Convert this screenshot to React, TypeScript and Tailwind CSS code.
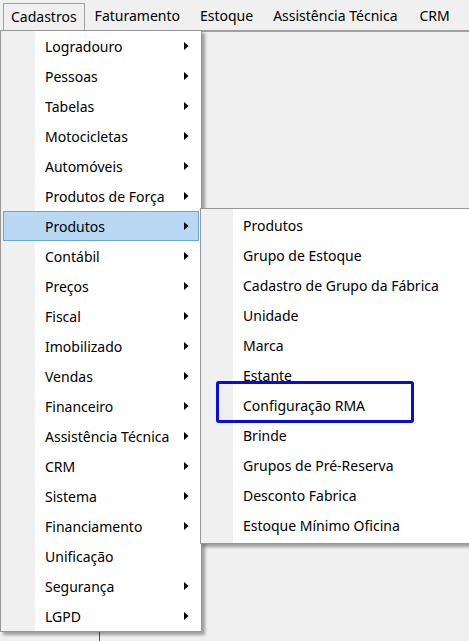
import React from 'react';

const mainItems: { label: string; sub: boolean }[] = [
  { label: 'Logradouro', sub: true },
  { label: 'Pessoas', sub: true },
  { label: 'Tabelas', sub: true },
  { label: 'Motocicletas', sub: true },
  { label: 'Automóveis', sub: true },
  { label: 'Produtos de Força', sub: true },
  { label: 'Produtos', sub: true },
  { label: 'Contábil', sub: true },
  { label: 'Preços', sub: true },
  { label: 'Fiscal', sub: true },
  { label: 'Imobilizado', sub: true },
  { label: 'Vendas', sub: true },
  { label: 'Financeiro', sub: true },
  { label: 'Assistência Técnica', sub: true },
  { label: 'CRM', sub: true },
  { label: 'Sistema', sub: true },
  { label: 'Financiamento', sub: true },
  { label: 'Unificação', sub: false },
  { label: 'Segurança', sub: true },
  { label: 'LGPD', sub: true },
];

const subItems = [
  'Produtos',
  'Grupo de Estoque',
  'Cadastro de Grupo da Fábrica',
  'Unidade',
  'Marca',
  'Estante',
  'Configuração RMA',
  'Brinde',
  'Grupos de Pré-Reserva',
  'Desconto Fabrica',
  'Estoque Mínimo Oficina',
];

const menuBar = ['Faturamento', 'Estoque', 'Assistência Técnica', 'CRM'];

const Arrow = () => (
  <svg width="5" height="8" viewBox="0 0 5 8" className="shrink-0">
    <path d="M0 0 L4.5 4 L0 8 Z" fill="#000" />
  </svg>
);

export default function App() {
  return (
    <div
      className="relative w-[469px] h-[641px] overflow-hidden bg-[#f0f0f0] text-black text-[14px]"
      style={{ fontFamily: '"Noto Sans", "Open Sans", sans-serif' }}
    >
      {/* menu bar */}
      <div className="flex h-[32px] items-center border-b-2 border-[#a0a0a0] pl-[3px]">
        <div className="h-[27px] mt-[2px] px-[7px] flex items-center border border-[#a0a0a0] border-b-0 bg-[#f0f0f0]">
          Cadastros
        </div>
        <div className="flex items-center gap-[20px] ml-[10px]">
          {menuBar.map((m) => (
            <span key={m} className={m === 'CRM' ? 'ml-[2px]' : ''}>
              {m}
            </span>
          ))}
        </div>
      </div>

      {/* background window edge */}
      <div className="absolute left-[99px] top-[600px] h-[41px] border-l border-[#555]" />

      {/* main dropdown */}
      <div className="absolute left-0 top-[30px] w-[202px] border border-[#979797] bg-[linear-gradient(to_right,#f0f0f0_34px,#fff_34px)] px-[2px] shadow-[3px_3px_3px_rgba(0,0,0,0.35)]">
        {mainItems.map((it) => {
          const active = it.label === 'Produtos';
          return (
            <div
              key={it.label}
              className={
                'flex h-[30px] items-center justify-between pl-[41px] pr-[9px] border ' +
                (active ? 'bg-[#b8d8f4] border-[#64a8e2]' : 'border-transparent')
              }
            >
              <span>{it.label}</span>
              {it.sub && <Arrow />}
            </div>
          );
        })}
      </div>

      {/* submenu */}
      <div className="absolute left-[200px] top-[208px] w-[290px] border border-[#979797] bg-[linear-gradient(to_right,#f0f0f0_32px,#fff_32px)] pt-[1px] pb-[3px] pl-[2px] shadow-[3px_3px_3px_rgba(0,0,0,0.35)]">
        {subItems.map((s) => (
          <div key={s} className="flex h-[30px] items-center pl-[40px]">
            {s}
          </div>
        ))}
      </div>

      {/* annotation box */}
      <div className="absolute left-[216px] top-[381px] w-[198px] h-[42px] border-[3px] border-[#0a0ae6] rounded-[3px] shadow-[0_0_0.5px_#0a0ae6]" />
    </div>
  );
}
